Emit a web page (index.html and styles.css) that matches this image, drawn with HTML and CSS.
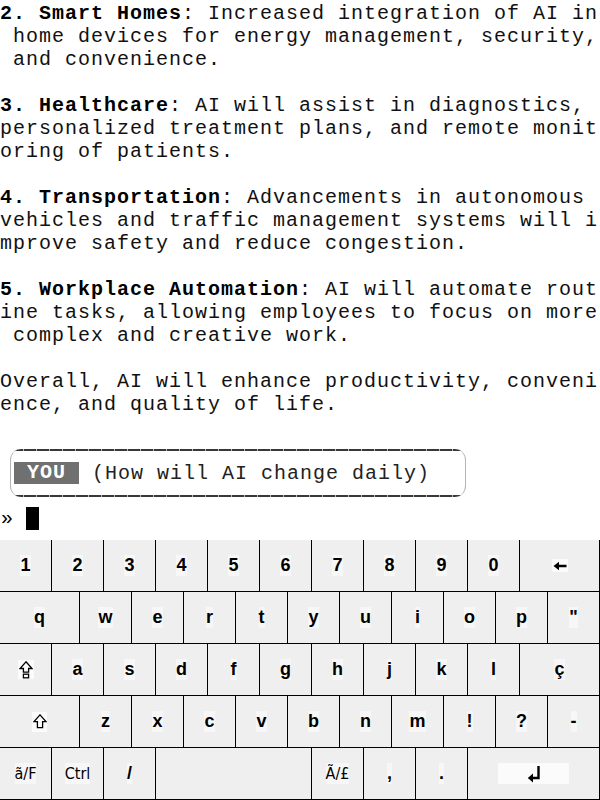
FILE: index.html
```html
<!DOCTYPE html>
<html>
<head>
<meta charset="utf-8">
<link rel="stylesheet" href="styles.css">
</head>
<body>
<div class="screen">
  <div class="term">
<pre class="out"><b>2. Smart Homes</b>: Increased integration of AI in
 home devices for energy management, security,
 and convenience.

<b>3. Healthcare</b>: AI will assist in diagnostics,
personalized treatment plans, and remote monit
oring of patients.

<b>4. Transportation</b>: Advancements in autonomous
vehicles and traffic management systems will i
mprove safety and reduce congestion.

<b>5. Workplace Automation</b>: AI will automate rout
ine tasks, allowing employees to focus on more
 complex and creative work.

Overall, AI will enhance productivity, conveni
ence, and quality of life.
</pre>
    <div class="blank"></div>
    <div class="frame">
      <span class="badge">YOU</span><span class="ask"> (How will AI change daily)</span>
    </div>
    <div class="prompt"><span class="pr">»</span><span class="cursor"></span></div>
  </div>

  <div class="kbd">
    <div class="row">
      <div class="key"><span class="lbl">1</span></div>
      <div class="key"><span class="lbl">2</span></div>
      <div class="key"><span class="lbl">3</span></div>
      <div class="key"><span class="lbl">4</span></div>
      <div class="key"><span class="lbl">5</span></div>
      <div class="key"><span class="lbl">6</span></div>
      <div class="key"><span class="lbl">7</span></div>
      <div class="key"><span class="lbl">8</span></div>
      <div class="key"><span class="lbl">9</span></div>
      <div class="key"><span class="lbl">0</span></div>
      <div class="key w80"><span class="ico bs"><svg width="14" height="10" viewBox="0 0 14 10"><path d="M0.5 5 L6 0.8 L6 3.8 L13.5 3.8 L13.5 6.2 L6 6.2 L6 9.2 Z" fill="#000"/></svg></span></div>
    </div>
    <div class="row">
      <div class="key w80"><span class="lbl">q</span></div>
      <div class="key"><span class="lbl">w</span></div>
      <div class="key"><span class="lbl">e</span></div>
      <div class="key"><span class="lbl">r</span></div>
      <div class="key"><span class="lbl">t</span></div>
      <div class="key"><span class="lbl">y</span></div>
      <div class="key"><span class="lbl">u</span></div>
      <div class="key"><span class="lbl">i</span></div>
      <div class="key"><span class="lbl">o</span></div>
      <div class="key"><span class="lbl">p</span></div>
      <div class="key"><span class="lbl">"</span></div>
    </div>
    <div class="row">
      <div class="key"><span class="ico caps"><svg width="14" height="18" viewBox="0 0 14 18"><path d="M7 0.8 L13 7.5 L9.6 7.5 L9.6 11.2 L4.4 11.2 L4.4 7.5 L1 7.5 Z" fill="none" stroke="#000" stroke-width="1.3" stroke-linejoin="miter"/><rect x="4.4" y="13.2" width="5.2" height="3.6" fill="none" stroke="#000" stroke-width="1.3"/></svg></span></div>
      <div class="key"><span class="lbl">a</span></div>
      <div class="key"><span class="lbl">s</span></div>
      <div class="key"><span class="lbl">d</span></div>
      <div class="key"><span class="lbl">f</span></div>
      <div class="key"><span class="lbl">g</span></div>
      <div class="key"><span class="lbl">h</span></div>
      <div class="key"><span class="lbl">j</span></div>
      <div class="key"><span class="lbl">k</span></div>
      <div class="key"><span class="lbl">l</span></div>
      <div class="key w80"><span class="lbl">ç</span></div>
    </div>
    <div class="row">
      <div class="key w80"><span class="ico shift"><svg width="14" height="15" viewBox="0 0 14 15"><path d="M7 0.9 L13 7.6 L9.6 7.6 L9.6 13.6 L4.4 13.6 L4.4 7.6 L1 7.6 Z" fill="none" stroke="#000" stroke-width="1.3"/></svg></span></div>
      <div class="key"><span class="lbl">z</span></div>
      <div class="key"><span class="lbl">x</span></div>
      <div class="key"><span class="lbl">c</span></div>
      <div class="key"><span class="lbl">v</span></div>
      <div class="key"><span class="lbl">b</span></div>
      <div class="key"><span class="lbl">n</span></div>
      <div class="key"><span class="lbl">m</span></div>
      <div class="key"><span class="lbl">!</span></div>
      <div class="key"><span class="lbl">?</span></div>
      <div class="key"><span class="lbl">-</span></div>
    </div>
    <div class="row">
      <div class="key"><span class="lbl thin">ã/F</span></div>
      <div class="key"><span class="lbl thin">Ctrl</span></div>
      <div class="key"><span class="lbl">/</span></div>
      <div class="key w156"></div>
      <div class="key"><span class="lbl thin">Ã/£</span></div>
      <div class="key"><span class="lbl">,</span></div>
      <div class="key"><span class="lbl">.</span></div>
      <div class="key w132"><span class="ico enter"><svg width="14" height="18" viewBox="0 0 14 18"><path d="M11.5 1 L11.5 13 L5 13" fill="none" stroke="#000" stroke-width="2.4"/><path d="M0.8 13 L6 8.6 L6 17.4 Z" fill="#000"/></svg></span></div>
    </div>
  </div>
</div>
</body>
</html>
```

FILE: styles.css
```css
* { box-sizing: border-box; }

html, body {
  margin: 0;
  padding: 0;
  background: #fff;
}

.screen {
  width: 600px;
  height: 800px;
  display: flex;
  flex-direction: column;
  overflow: hidden;
}

.term {
  padding-top: 2px;
  font-family: "Liberation Mono", "DejaVu Sans Mono", monospace;
  font-size: 20px;
  letter-spacing: 1px;
  line-height: 23px;
  color: #111;
}

.out {
  margin: 0;
  font: inherit;
  white-space: pre;
}

.out b {
  font-weight: bold;
  color: #000;
}

.blank {
  height: 22px;
}

.frame {
  margin: 11px 0 10px 10px;
  width: 456px;
  height: 48px;
  padding-left: 3px;
  display: flex;
  align-items: center;
  border-left: 1px solid #b4b4b4;
  border-right: 1px solid #b4b4b4;
  border-radius: 11px;
  background:
    repeating-linear-gradient(90deg, #383838 0 12px, #b8b8b8 12px 13px) left top / 100% 2px no-repeat,
    repeating-linear-gradient(90deg, #383838 0 12px, #b8b8b8 12px 13px) left bottom / 100% 2px no-repeat;
}

.badge {
  background: #707070;
  color: #fff;
  font-weight: bold;
  padding: 0 13px;
  height: 22px;
  line-height: 22px;
}

.ask {
  white-space: pre;
  color: #222;
}

.prompt {
  height: 23px;
  display: flex;
  align-items: stretch;
}

.pr {
  width: 26px;
  padding-left: 1px;
  color: #000;
}

.cursor {
  width: 13px;
  height: 23px;
  background: #000;
}

.kbd {
  margin-top: 10px;
  display: flex;
  flex-direction: column;
}

.row {
  display: flex;
  height: 52px;
}

.key {
  width: 52px;
  height: 52px;
  flex: none;
  background: #efefef;
  border-right: 1px solid #000;
  border-bottom: 1px solid #000;
  display: flex;
  align-items: center;
  justify-content: center;
}

.w80 { width: 80px; }
.w156 { width: 156px; }
.w132 { width: 132px; }

.lbl {
  font-family: "Liberation Sans", Arial, sans-serif;
  font-weight: bold;
  font-size: 18px;
  line-height: 21px;
  color: #000;
  background: #f7f7f7;
}

.lbl.thin {
  font-family: "DejaVu Sans", "Noto Sans", sans-serif;
  font-stretch: condensed;
  font-weight: normal;
  font-size: 16px;
  line-height: 21px;
}

.ico {
  display: flex;
  align-items: center;
  justify-content: center;
  background: #fbfbfb;
}

.ico svg { display: block; }

.bs { width: 16px; height: 13px; }
.caps { width: 16px; height: 19px; }
.shift { width: 15px; height: 20px; }
.enter { width: 71px; height: 21px; }
```
